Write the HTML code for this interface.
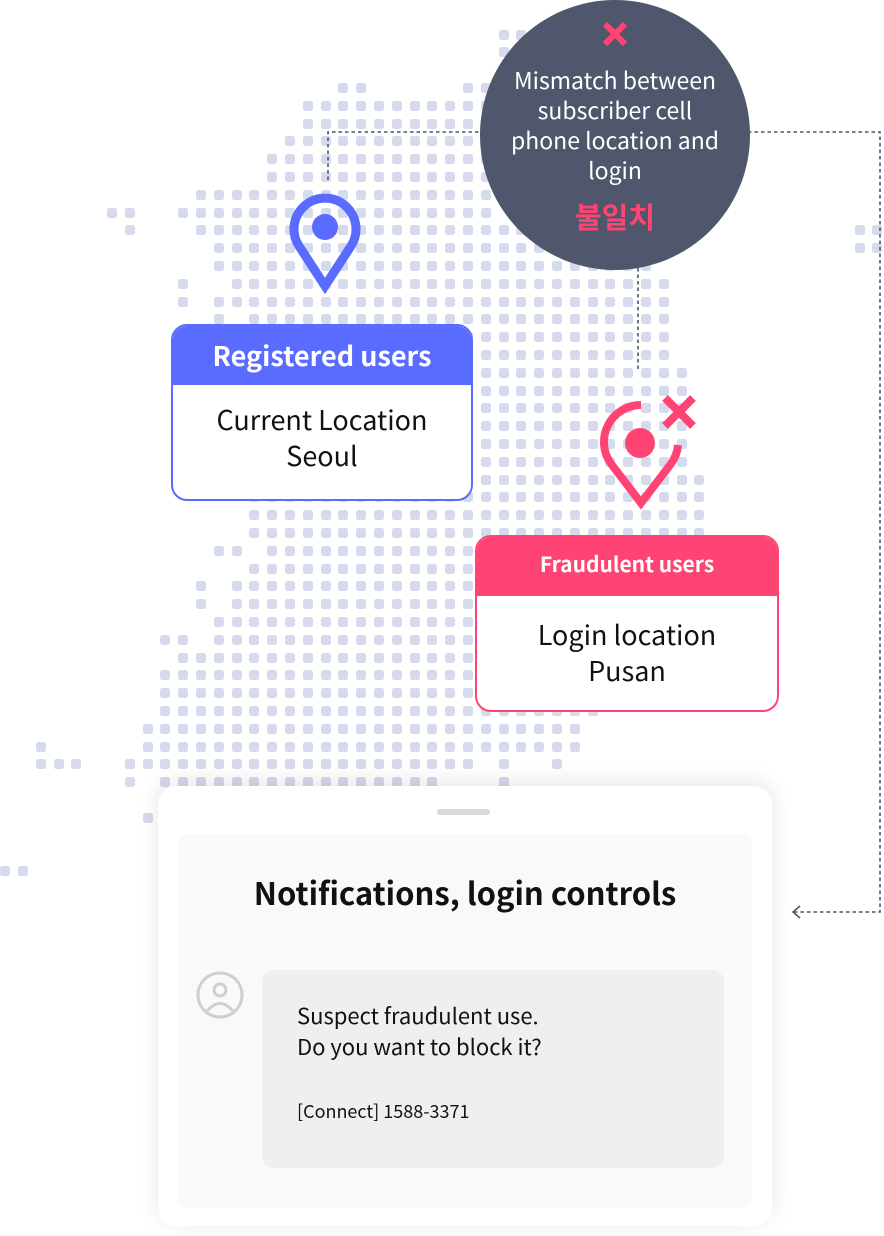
<!DOCTYPE html>
<html><head><meta charset="utf-8">
<style>
*{margin:0;padding:0;box-sizing:border-box}
body{width:884px;height:1236px;position:relative;overflow:hidden;background:#fff;font-family:"Noto Sans CJK KR","Liberation Sans",sans-serif;color:#111}
#dots{position:absolute;left:0;top:0;width:884px;height:1236px}
.d{position:absolute;width:10px;height:10px;border-radius:2.5px;background:#d5daec}
.abs{position:absolute}
.box{position:absolute;background:#fff;border-radius:16px;overflow:hidden;text-align:center}
.box .h{color:#fff;font-weight:700}
</style></head><body>
<div id="dots"></div>
<svg class="abs" style="left:0;top:0" width="884" height="1236">
<g fill="none" stroke="#4f556a" stroke-width="1.6" stroke-dasharray="3.5 3">
<path d="M328 180 V132 H482"/>
<path d="M748 132 H880 V912 H794"/>
<path d="M638 268 V372"/>
</g>
<path d="M800 906 L793 912 L800 918" fill="none" stroke="#4f556a" stroke-width="1.6"/>
</svg>
<div class="abs" style="left:480px;top:0;width:270px;height:270px;border-radius:50%;background:#50566b;text-align:center;color:#fff">
<svg class="abs" style="left:122px;top:21px" width="26" height="26"><path d="M3 3L23 23M23 3L3 23" stroke="#ff4473" stroke-width="6"/></svg>
<div class="abs" style="left:0;top:64px;width:270px;font-size:23px;line-height:30px">Mismatch between<br>subscriber cell<br>phone location and<br>login</div>
<div class="abs" style="left:0;top:196px;width:270px;font-size:29px;font-weight:700;color:#ff4473;line-height:40px">불일치</div>
</div>
<svg class="abs" style="left:285px;top:188px" width="80" height="110"><path d="M40 98 L14 58 A31 31 0 1 1 66 58 Z" fill="none" stroke="#5a6cff" stroke-width="9" stroke-linejoin="miter"/><circle cx="40" cy="39" r="13" fill="#5a6cff"/></svg>
<svg class="abs" style="left:590px;top:390px" width="120" height="125"><path d="M51 15 A37 37 0 0 0 21.6 74.5 L51 113 L80.4 74.5 A37 37 0 0 0 88 55" fill="none" stroke="#ff4473" stroke-width="8"/><circle cx="50" cy="53" r="15" fill="#ff4473"/><path d="M75 8L103 36M103 8L75 36" stroke="#ff4473" stroke-width="8"/></svg>
<div class="box" style="left:171px;top:324px;width:302px;height:177px;border:2px solid #5a6cff">
<div class="h" style="background:#5a6cff;height:61px;line-height:62px;font-size:27px;margin:-2px -2px 0">Registered users</div>
<div style="font-size:27px;line-height:36px;padding-top:16px">Current Location<br>Seoul</div>
</div>
<div class="box" style="left:475px;top:535px;width:304px;height:177px;border:2px solid #ff4473">
<div class="h" style="background:#ff4473;height:61px;line-height:58px;font-size:21px;margin:-2px -2px 0">Fraudulent users</div>
<div style="font-size:27px;line-height:36px;padding-top:20px">Login location<br>Pusan</div>
</div>
<div class="abs" style="left:158px;top:786px;width:614px;height:440px;background:#fff;border-radius:18px;box-shadow:0 -4px 22px rgba(0,0,0,0.1)">
<div class="abs" style="left:279px;top:23px;width:53px;height:6px;border-radius:3px;background:#d8d8d8"></div>
<div class="abs" style="left:20px;top:48px;width:574px;height:374px;background:#f8f9fb;border-radius:10px">
<div class="abs" style="left:0;top:36px;width:574px;text-align:center;font-size:31px;font-weight:700;color:#111;line-height:44px">Notifications, login controls</div>
<svg class="abs" style="left:17px;top:136px" width="50" height="50"><circle cx="25" cy="25" r="22" fill="none" stroke="#cfcfcf" stroke-width="3"/><circle cx="25" cy="20" r="6" fill="none" stroke="#cfcfcf" stroke-width="3"/><path d="M12 41 Q25 26 38 41" fill="none" stroke="#cfcfcf" stroke-width="3"/></svg>
<div class="abs" style="left:84px;top:136px;width:462px;height:198px;background:#efefef;border-radius:12px">
<div class="abs" style="left:35px;top:30px;font-size:22px;line-height:31px;color:#111">Suspect fraudulent use.<br>Do you want to block it?</div>
<div class="abs" style="left:35px;top:128px;font-size:18px;line-height:26px;color:#111">[Connect] 1588-3371</div>
</div>
</div>
</div>
<script>
var R={"-3":[[503,521]],"-2":[[503,503]],0:[[345,362],[468,486]],1:[[308,490]],2:[[308,490]],3:[[290,490]],4:[[272,490]],5:[[272,490]],6:[[201,490]],7:[[112,130],[183,490]],8:[[130,130],[201,520],[857,875]],9:[[219,540],[857,875]],10:[[219,640]],11:[[183,183],[237,665]],12:[[183,183],[219,665]],13:[[219,219],[254,665]],14:[[254,665]],15:[[254,665]],16:[[250,686]],17:[[250,686]],18:[[250,686]],19:[[250,686]],20:[[250,686]],21:[[250,686]],22:[[250,700]],23:[[250,702]],24:[[250,702]],25:[[250,702]],26:[[215,233],[268,702]],27:[[250,702]],28:[[197,197],[233,702]],29:[[197,197],[233,702]],30:[[215,702]],31:[[161,179],[215,702]],32:[[179,702]],33:[[161,702]],34:[[161,702]],35:[[161,597]],36:[[143,580]],37:[[36,36],[143,580]],38:[[36,72],[125,468],[504,504],[557,557]],39:[[125,125],[161,429],[504,504]],40:[[161,429]],41:[[147,147]],44:[[0,18]]};
var h="";for(var r in R){var y=88+17.8*r;R[r].forEach(function(s){var a=Math.round((s[0]-112)/17.8),b=Math.round((s[1]-112)/17.8);for(var c=a;c<=b;c++){var x=112+17.8*c;h+='<div class="d" style="left:'+(x-5).toFixed(1)+'px;top:'+(y-5).toFixed(1)+'px"></div>';}});}
document.getElementById("dots").innerHTML=h;
</script>
</body></html>
